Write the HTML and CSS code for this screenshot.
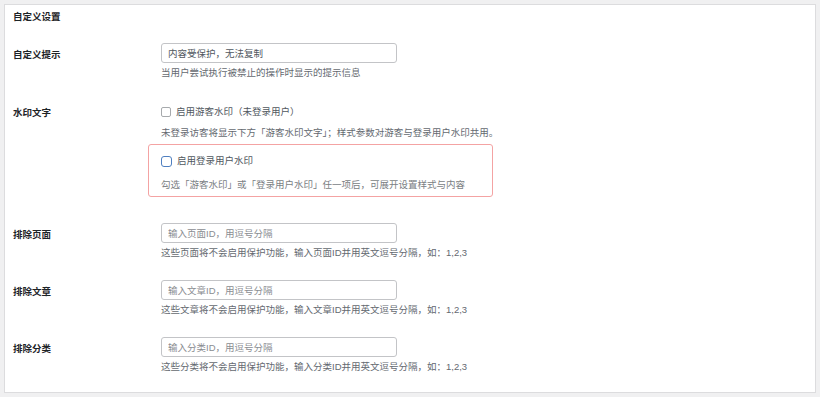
FILE: index.html
```html
<!DOCTYPE html>
<html lang="zh-CN">
<head>
    <meta charset="UTF-8">
    <meta name="viewport" content="width=device-width, initial-scale=1.0">
    <title>自定义设置</title>
    <link rel="stylesheet" href="styles.css">
</head>
<body>
    <div class="panel">
        <h2 class="panel-title">自定义设置</h2>

        <div class="row">
            <label class="row-label" for="tip">自定义提示</label>
            <div class="row-field">
                <input type="text" id="tip" class="text-input" value="内容受保护，无法复制">
                <p class="desc">当用户尝试执行被禁止的操作时显示的提示信息</p>
            </div>
        </div>

        <div class="row row-watermark">
            <div class="row-label">水印文字</div>
            <div class="row-field">
                <label class="check-line">
                    <span class="check"></span>
                    启用游客水印（未登录用户）
                </label>
                <p class="desc desc-gap">未登录访客将显示下方「游客水印文字」；样式参数对游客与登录用户水印共用。</p>

                <div class="notice-box">
                    <label class="check-line">
                        <span class="check check-focus"></span>
                        启用登录用户水印
                    </label>
                    <p class="desc desc-notice">勾选「游客水印」或「登录用户水印」任一项后，可展开设置样式与内容</p>
                </div>
            </div>
        </div>

        <div class="row">
            <label class="row-label" for="pages">排除页面</label>
            <div class="row-field">
                <input type="text" id="pages" class="text-input" placeholder="输入页面ID，用逗号分隔">
                <p class="desc">这些页面将不会启用保护功能，输入页面ID并用英文逗号分隔，如：1,2,3</p>
            </div>
        </div>

        <div class="row">
            <label class="row-label" for="posts">排除文章</label>
            <div class="row-field">
                <input type="text" id="posts" class="text-input" placeholder="输入文章ID，用逗号分隔">
                <p class="desc">这些文章将不会启用保护功能，输入文章ID并用英文逗号分隔，如：1,2,3</p>
            </div>
        </div>

        <div class="row">
            <label class="row-label" for="cats">排除分类</label>
            <div class="row-field">
                <input type="text" id="cats" class="text-input" placeholder="输入分类ID，用逗号分隔">
                <p class="desc">这些分类将不会启用保护功能，输入分类ID并用英文逗号分隔，如：1,2,3</p>
            </div>
        </div>
    </div>
</body>
</html>
```

FILE: styles.css
```css
body {
    margin: 0;
    padding: 4px;
    background-color: #f0f0f1;
    color: #1d2327;
    font-family: "Liberation Sans", "Noto Sans CJK SC", sans-serif;
    font-size: 9.5px;
}

.panel {
    background: #fff;
    border: 1px solid #dcdcde;
    padding: 0 8px;
    height: 389px;
    box-sizing: border-box;
}

.panel-title {
    margin: 0;
    font-size: 9.5px;
    font-weight: bold;
    line-height: 14px;
    padding-top: 5px;
    height: 28px;
    box-sizing: border-box;
}

.row {
    display: flex;
    padding: 10px 0;
}

.row-label {
    width: 148px;
    flex-shrink: 0;
    padding-top: 5px;
    font-weight: bold;
    line-height: 14px;
}

.row-field {
    display: flex;
    flex-direction: column;
    align-items: flex-start;
}

.text-input {
    width: 236px;
    height: 20px;
    box-sizing: border-box;
    border: 1px solid #c3c4c7;
    border-radius: 3px;
    padding: 0 6px;
    font-family: inherit;
    font-size: 9.5px;
    color: #50575e;
    margin: 0;
}

.text-input::placeholder {
    color: #8a8d91;
}

.desc {
    margin: 3px 0 0;
    line-height: 14px;
    color: #646970;
}

.row-watermark {
    padding: 11px 0 16px;
}

.row-watermark .row-field {
    padding-top: 4px;
}

.check-line {
    display: flex;
    align-items: center;
    gap: 5px;
    line-height: 14px;
    color: #50575e;
}

.check {
    width: 10px;
    height: 10px;
    box-sizing: border-box;
    border: 1px solid #a7aaad;
    border-radius: 2px;
    background: #fff;
}

.check-focus {
    width: 11px;
    height: 11px;
    border-color: #4f7fc0;
    border-radius: 3px;
}

.desc-gap {
    margin-top: 7px;
}

.notice-box {
    margin: 4px 0 0 -13px;
    width: 345px;
    height: 53px;
    box-sizing: border-box;
    border: 1px solid #f4a3a3;
    border-radius: 3px;
    padding: 9px 12px 0;
}

.desc-notice {
    margin-top: 10px;
    color: #7a7e83;
}
```
